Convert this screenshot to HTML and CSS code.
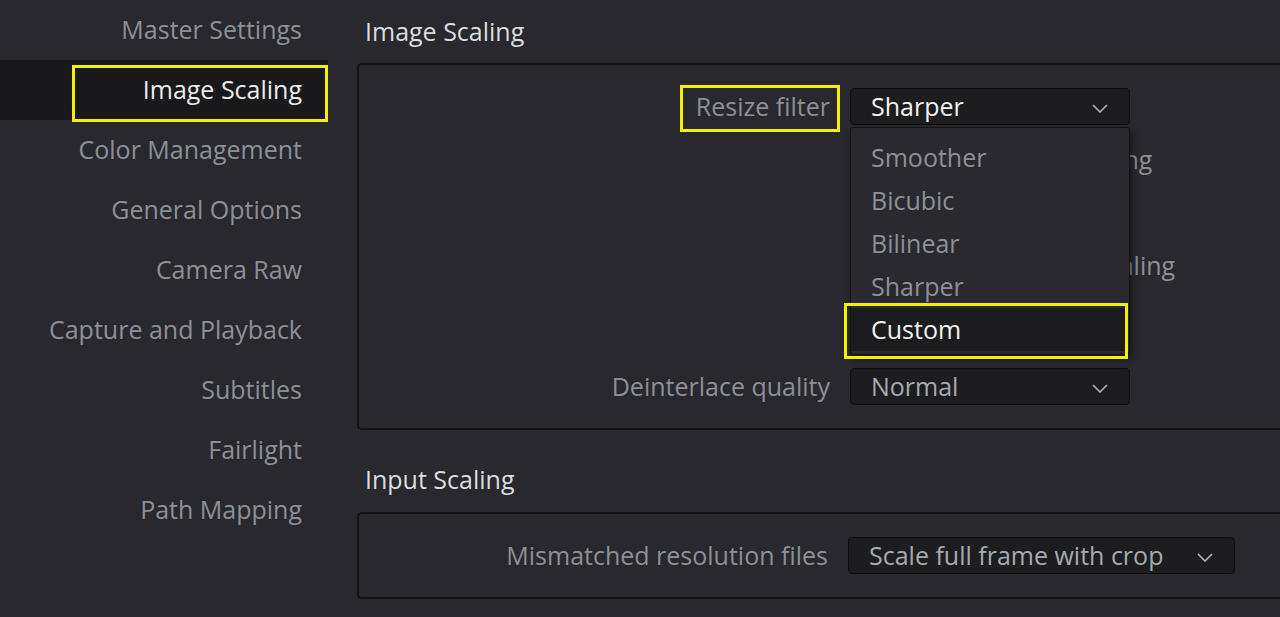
FILE: index.html
```html
<!DOCTYPE html>
<html lang="en">
<head>
    <meta charset="UTF-8">
    <title>Project Settings</title>

    <link rel="stylesheet" href="styles.css">

</head>
<body>

<div id="settings">
    <!-- left: settings categories -->
    <ul class="side">
        <li>Master Settings</li>
        <li class="active"><span class="mark side_mark"></span>Image Scaling</li>
        <li>Color Management</li>
        <li>General Options</li>
        <li>Camera Raw</li>
        <li>Capture and Playback</li>
        <li>Subtitles</li>
        <li>Fairlight</li>
        <li>Path Mapping</li>
    </ul>

    <!-- right: the selected page -->
    <div class="page">
        <h2 class="title">Image Scaling</h2>
        <div class="panel">
            <div class="row">
                <div class="label"><span class="label_text">Resize filter<span class="mark label_mark"></span></span></div>
                <div class="ctrl">
                    <div class="select current">Sharper
                        <svg class="chev" width="16" height="9" viewBox="0 0 16 9"><polyline points="1,1 8,8 15,1" fill="none" stroke="#b4b4b8" stroke-width="1.6"/></svg>
                    </div>

                    <!-- open dropdown list -->
                    <ul class="menu">
                        <li>Smoother</li>
                        <li>Bicubic</li>
                        <li>Bilinear</li>
                        <li>Sharper</li>
                        <li class="hover">Custom<span class="mark item_mark"></span></li>
                    </ul>
                </div>
            </div>
            <div class="row">
                <div class="label"></div>
                <div class="ctrl check"><span class="box"></span>Use sharper downscaling</div>
            </div>
            <div class="row">
                <div class="label"></div>
                <div class="ctrl check"><span class="box"></span>Anti-alias</div>
            </div>
            <div class="row">
                <div class="label"></div>
                <div class="ctrl check"><span class="box"></span>Use smoother downscaling</div>
            </div>
            <div class="row">
                <div class="label"></div>
                <div class="ctrl check"><span class="box"></span>Auto</div>
            </div>
            <div class="row last">
                <div class="label">Deinterlace quality</div>
                <div class="ctrl">
                    <div class="select">Normal
                        <svg class="chev" width="16" height="9" viewBox="0 0 16 9"><polyline points="1,1 8,8 15,1" fill="none" stroke="#b4b4b8" stroke-width="1.6"/></svg>
                    </div>
                </div>
            </div>
        </div>

        <h2 class="title second">Input Scaling</h2>
        <div class="panel">
            <div class="row">
                <div class="label wide_label">Mismatched resolution files</div>
                <div class="ctrl">
                    <div class="select long">Scale full frame with crop
                        <svg class="chev" width="16" height="9" viewBox="0 0 16 9"><polyline points="1,1 8,8 15,1" fill="none" stroke="#b4b4b8" stroke-width="1.6"/></svg>
                    </div>
                </div>
            </div>
        </div>
    </div>
</div>

</body>
</html>
```

FILE: styles.css
```css
* {
    margin: 0;
    padding: 0;
    list-style: none;
    box-sizing: border-box;
}

body {
    background-color: #28282e;
    font-family: "Open Sans", "Noto Sans", sans-serif;
    font-size: 25px;
    color: #8b9097;
    overflow: hidden;
}

#settings {
    display: flex;
    height: 617px;
}

/* categories */
.side {
    width: 328px;
    flex: none;
}

.side li {
    position: relative;
    height: 60px;
    line-height: 59px;
    text-align: right;
    padding-right: 26px;
}

.side li.active {
    background-color: #19191b;
    color: #ececec;
}

/* yellow call-out frames */
.mark {
    position: absolute;
    border: 3px solid #f2f200;
    pointer-events: none;
}

.side_mark {
    left: 72px;
    right: 0;
    top: 5px;
    bottom: -2px;
}

/* page */
.page {
    flex: 1;
    padding-left: 29px;
}

.title {
    height: 63px;
    line-height: 62px;
    padding-left: 8px;
    font-size: 25px;
    font-weight: normal;
    color: #dcdcde;
}

.title.second {
    margin-top: 19px;
    line-height: 60px;
}

.panel {
    border: 2px solid #141416;
    border-right: none;
    border-radius: 5px 0 0 5px;
    padding: 23px 0 23px;
    display: flex;
    flex-direction: column;
    gap: 16px;
}

.row {
    display: flex;
    height: 37px;
    align-items: center;
}

.row.last {
    margin-top: 15px;
}

.label {
    width: 471px;
    flex: none;
    text-align: right;
    line-height: 37px;
    white-space: nowrap;
}

.label_text {
    position: relative;
    display: inline-block;
}

.label_mark {
    left: -16px;
    right: -10px;
    top: -3px;
    bottom: -7px;
}

.ctrl {
    position: relative;
    margin-left: 20px;
    width: 280px;
    height: 37px;
}

.select {
    position: relative;
    height: 37px;
    line-height: 35px;
    padding-left: 20px;
    background-color: #1d1d20;
    border: 1px solid #0e0e10;
    border-radius: 4px;
    color: #a4aab2;
    white-space: nowrap;
}

.select.current {
    color: #f2f2f2;
}

.chev {
    position: absolute;
    right: 21px;
    top: 15px;
}

/* hidden behind the open list */
.check {
    display: flex;
    align-items: center;
    white-space: nowrap;
    line-height: 37px;
}

.check .box {
    width: 18px;
    height: 18px;
    margin-right: 8px;
    border: 1px solid #101012;
    background-color: #1d1d20;
    border-radius: 2px;
}

/* dropdown list */
.menu {
    position: absolute;
    z-index: 2;
    left: 0;
    top: 39px;
    width: 280px;
    height: 228px;
    padding-top: 8px;
    background-color: #29292f;
    border: 1px solid #141416;
    border-radius: 3px;
    box-shadow: 2px 4px 8px rgba(0, 0, 0, 0.45);
}

.menu li {
    position: relative;
    height: 43px;
    line-height: 43px;
    padding-left: 20px;
    color: #8b9097;
}

.menu li.hover {
    background-color: #1c1c1e;
    color: #f2f2f2;
    margin-right: 2px;
}

.item_mark {
    left: -7px;
    right: -1px;
    top: -5px;
    bottom: -8px;
}

/* input scaling block */
.wide_label {
    width: 469px;
}

.select.long {
    width: 387px;
}
```
